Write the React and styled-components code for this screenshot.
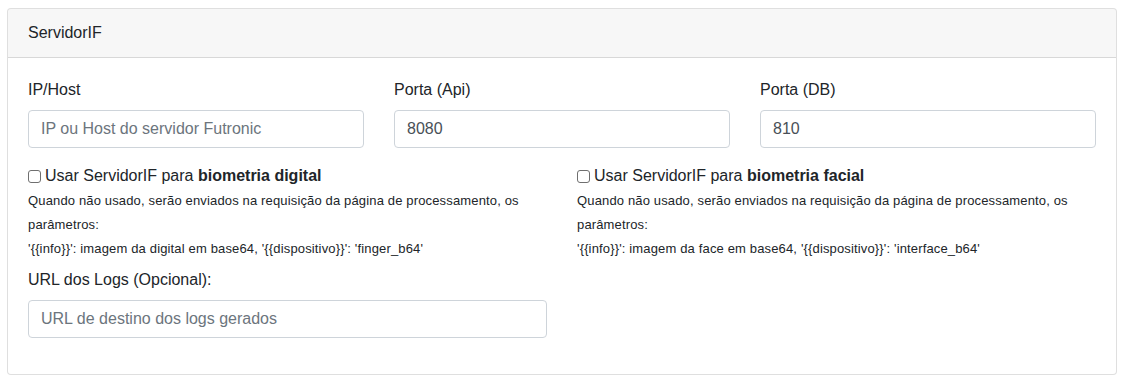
import React from "react";
import styled, { createGlobalStyle } from "styled-components";

const GlobalStyle = createGlobalStyle`
  * { box-sizing: border-box; }
  body {
    margin: 0;
    padding: 8px 7px;
    background: #fff;
    font-family: "Liberation Sans", Arial, sans-serif;
    font-size: 16px;
    line-height: 1.5;
    color: #212529;
  }
`;

const Card = styled.div`
  width: 1110px;
  border: 1px solid rgba(0, 0, 0, 0.125);
  border-radius: 4px;
  background: #fff;
`;

const CardHeader = styled.div`
  padding: 12px 20px;
  background: rgba(0, 0, 0, 0.03);
  border-bottom: 1px solid rgba(0, 0, 0, 0.125);
  border-radius: 3px 3px 0 0;
`;

const CardBody = styled.div`
  padding: 20px;
`;

const Row = styled.div`
  display: grid;
  grid-template-columns: repeat(${(p) => p.cols}, 1fr);
  column-gap: 30px;
`;

const FormGroup = styled.div`
  margin-bottom: ${(p) => (p.tight ? "7px" : "16px")};
`;

const Label = styled.label`
  display: block;
  margin-bottom: 8px;
`;

const Input = styled.input`
  display: block;
  width: 100%;
  height: 38px;
  padding: 6px 12px;
  font-family: inherit;
  font-size: 16px;
  line-height: 1.5;
  color: #495057;
  background: #fff;
  border: 1px solid #ced4da;
  border-radius: 4px;
  outline: none;
  &::placeholder {
    color: #6c757d;
  }
`;

const CheckLine = styled.label`
  display: flex;
  align-items: center;
`;

const Check = styled.input`
  appearance: none;
  width: 13px;
  height: 13px;
  margin: 0 4px 0 0;
  border: 1px solid #6f6f6f;
  border-radius: 3px;
  background: #fff;
`;

const Help = styled.div`
  margin-top: 1px;
  font-size: 13px;
  letter-spacing: 0.15px;
  line-height: 24px;
`;

export default function App() {
  return (
    <>
      <GlobalStyle />
      <Card>
        <CardHeader>ServidorIF</CardHeader>
        <CardBody>
          <Row cols={3}>
            <FormGroup>
              <Label>IP/Host</Label>
              <Input placeholder="IP ou Host do servidor Futronic" />
            </FormGroup>
            <FormGroup>
              <Label>Porta (Api)</Label>
              <Input defaultValue="8080" />
            </FormGroup>
            <FormGroup>
              <Label>Porta (DB)</Label>
              <Input defaultValue="810" />
            </FormGroup>
          </Row>
          <Row cols={2}>
            <FormGroup tight>
              <CheckLine>
                <Check type="checkbox" />
                <span>
                  Usar ServidorIF para <b>biometria digital</b>
                </span>
              </CheckLine>
              <Help>
                Quando não usado, serão enviados na requisição da página de processamento, os
                parâmetros:
                <br />
                '{"{{info}}"}': imagem da digital em base64, '{"{{dispositivo}}"}': 'finger_b64'
              </Help>
            </FormGroup>
            <FormGroup tight>
              <CheckLine>
                <Check type="checkbox" />
                <span>
                  Usar ServidorIF para <b>biometria facial</b>
                </span>
              </CheckLine>
              <Help>
                Quando não usado, serão enviados na requisição da página de processamento, os
                parâmetros:
                <br />
                '{"{{info}}"}': imagem da face em base64, '{"{{dispositivo}}"}': 'interface_b64'
              </Help>
            </FormGroup>
          </Row>
          <Row cols={2}>
            <FormGroup>
              <Label>URL dos Logs (Opcional):</Label>
              <Input placeholder="URL de destino dos logs gerados" />
            </FormGroup>
          </Row>
        </CardBody>
      </Card>
    </>
  );
}
